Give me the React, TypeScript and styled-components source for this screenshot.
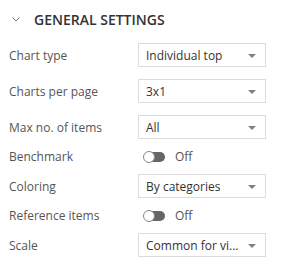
import React from 'react';
import styled, { createGlobalStyle } from 'styled-components';

const GlobalStyle = createGlobalStyle`
  html, body {
    margin: 0;
    padding: 0;
    background: #fff;
  }
  body {
    font-family: "Open Sans", "Liberation Sans", sans-serif;
  }
`;

type Setting =
  | { label: string; kind: 'select'; value: string }
  | { label: string; kind: 'toggle'; on: boolean };

const SETTINGS: Setting[] = [
  { label: 'Chart type', kind: 'select', value: 'Individual top' },
  { label: 'Charts per page', kind: 'select', value: '3x1' },
  { label: 'Max no. of items', kind: 'select', value: 'All' },
  { label: 'Benchmark', kind: 'toggle', on: false },
  { label: 'Coloring', kind: 'select', value: 'By categories' },
  { label: 'Reference items', kind: 'toggle', on: false },
  { label: 'Scale', kind: 'select', value: 'Common for vi...' },
];

function App() {
  return (
    <>
      <GlobalStyle />
      <Panel>
        <Header>
          <Chevron viewBox="0 0 8 5">
            <path d="M0.5 0.5 L4 4 L7.5 0.5" />
          </Chevron>
          <Title>GENERAL SETTINGS</Title>
        </Header>
        <List>
          {SETTINGS.map((s) => (
            <Row key={s.label} $tall={s.kind === 'select'}>
              <Label>{s.label}</Label>
              {s.kind === 'select' ? (
                <Select>
                  <span>{s.value}</span>
                  <Caret />
                </Select>
              ) : (
                <ToggleWrap>
                  <Track $on={s.on}>
                    <Knob $on={s.on} />
                  </Track>
                  <ToggleText>{s.on ? 'On' : 'Off'}</ToggleText>
                </ToggleWrap>
              )}
            </Row>
          ))}
        </List>
      </Panel>
    </>
  );
}

export default App;

const Panel = styled.div`
  width: 285px;
  height: 269px;
  background: #fff;
  box-sizing: border-box;
  padding: 0 19px 0 9px;
`;

const Header = styled.div`
  display: flex;
  align-items: center;
  height: 37px;
  padding-top: 1px;
  box-sizing: border-box;
`;

const Chevron = styled.svg`
  width: 8px;
  height: 5px;
  margin: 0 14px 0 3px;
  fill: none;
  stroke: #777;
  stroke-width: 1;
`;

const Title = styled.div`
  font-size: 14px;
  font-weight: 600;
  color: #333;
`;

const List = styled.div`
  display: flex;
  flex-direction: column;
`;

const Row = styled.div<{ $tall: boolean }>`
  display: grid;
  grid-template-columns: 129px 128px;
  align-items: center;
  height: ${(p) => (p.$tall ? '36px' : '23px')};
`;

const Label = styled.div`
  font-size: 12px;
  color: #555;
  white-space: nowrap;
`;

const Select = styled.div`
  height: 24px;
  box-sizing: border-box;
  border: 1px solid #dcdcdc;
  display: flex;
  align-items: center;
  justify-content: space-between;
  padding: 0 9px 0 7px;
  font-size: 12px;
  color: #333;
  white-space: nowrap;
`;

const Caret = styled.span`
  width: 0;
  height: 0;
  border-left: 4px solid transparent;
  border-right: 4px solid transparent;
  border-top: 4px solid #808080;
  margin-top: 1px;
`;

const ToggleWrap = styled.div`
  display: flex;
  align-items: center;
  gap: 10px;
  padding-left: 6px;
`;

const Track = styled.div<{ $on: boolean }>`
  position: relative;
  width: 21px;
  height: 10px;
  border-radius: 5px;
  background: ${(p) => (p.$on ? '#3a8dde' : '#666')};
`;

const Knob = styled.div<{ $on: boolean }>`
  position: absolute;
  top: -1px;
  left: ${(p) => (p.$on ? '10px' : '-1px')};
  width: 12px;
  height: 12px;
  box-sizing: border-box;
  border-radius: 50%;
  background: #fff;
  border: 1px solid #888;
`;

const ToggleText = styled.span`
  font-size: 12px;
  color: #555;
`;
